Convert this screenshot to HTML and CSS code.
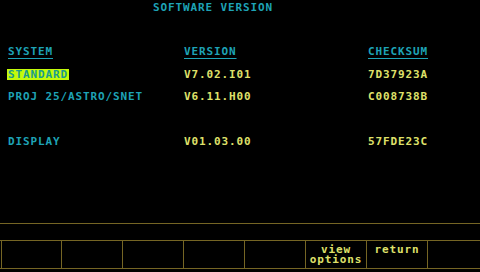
FILE: index.html
```html
<!DOCTYPE html>
<html>
<head>
<meta charset="utf-8">
<link rel="stylesheet" href="styles.css">
</head>
<body>
<div class="screen">
  <div class="title">SOFTWARE VERSION</div>
  <div class="table">
    <div class="cell head">SYSTEM</div>
    <div class="cell head">VERSION</div>
    <div class="cell head">CHECKSUM</div>
    <div class="cell label"><span class="hl">STANDARD</span></div>
    <div class="cell val">V7.02.I01</div>
    <div class="cell val">7D37923A</div>
    <div class="cell label">PROJ 25/ASTRO/SNET</div>
    <div class="cell val">V6.11.H00</div>
    <div class="cell val">C008738B</div>
    <div class="cell gap"></div>
    <div class="cell gap"></div>
    <div class="cell gap"></div>
    <div class="cell label">DISPLAY</div>
    <div class="cell val">V01.03.00</div>
    <div class="cell val">57FDE23C</div>
  </div>
  <div class="spacer"></div>
  <div class="rule"></div>
  <div class="softkeys">
    <div class="key"></div>
    <div class="key"></div>
    <div class="key"></div>
    <div class="key"></div>
    <div class="key"></div>
    <div class="key"><span class="line">view</span><span class="line">options</span></div>
    <div class="key"><span class="line">return</span></div>
    <div class="key"></div>
  </div>
</div>
</body>
</html>
```

FILE: styles.css
```css
* { box-sizing: border-box; }
html, body {
  margin: 0;
  padding: 0;
  background: #000;
}
.screen {
  width: 480px;
  height: 272px;
  display: flex;
  flex-direction: column;
  font-family: "DejaVu Sans Mono", "Liberation Mono", monospace;
  font-weight: bold;
  font-size: 11px;
  letter-spacing: 0.88px;
  line-height: 11px;
}
.title {
  color: #1ea3b6;
  padding: 2px 0 0 153px;
  height: 46px;
}
.table {
  display: grid;
  grid-template-columns: 176px 184px 1fr;
  grid-auto-rows: 22.5px;
  padding-left: 8px;
}
.cell { white-space: pre; }
.head {
  color: #1ea3b6;
  text-decoration: underline;
  text-underline-offset: 3px;
  text-decoration-thickness: 1px;
}
.label { color: #1ea3b6; }
.val { color: #dfe06a; }
.hl {
  background: #c4fa0a;
  color: #1a9c8c;
  margin-left: -1px;
  padding: 0 1px;
  display: inline-block;
  line-height: 11px;
}
.spacer { flex: 1; }
.rule {
  height: 1px;
  background: #756524;
  margin-bottom: 16px;
}
.softkeys {
  display: grid;
  grid-template-columns: 60px repeat(6, 61px) 1fr;
  padding-left: 1px;
  height: 29px;
  border-top: 1px solid #756524;
  border-bottom: 1px solid #756524;
  margin-bottom: 3px;
}
.key {
  border-left: 1px solid #756524;
  color: #dfe06a;
  text-align: center;
  font-size: 11px;
  padding-top: 4px;
  letter-spacing: 0.9px;
  display: flex;
  flex-direction: column;
  align-items: center;
}
.line {
  display: block;
  height: 10px;
  line-height: 10px;
}
```
